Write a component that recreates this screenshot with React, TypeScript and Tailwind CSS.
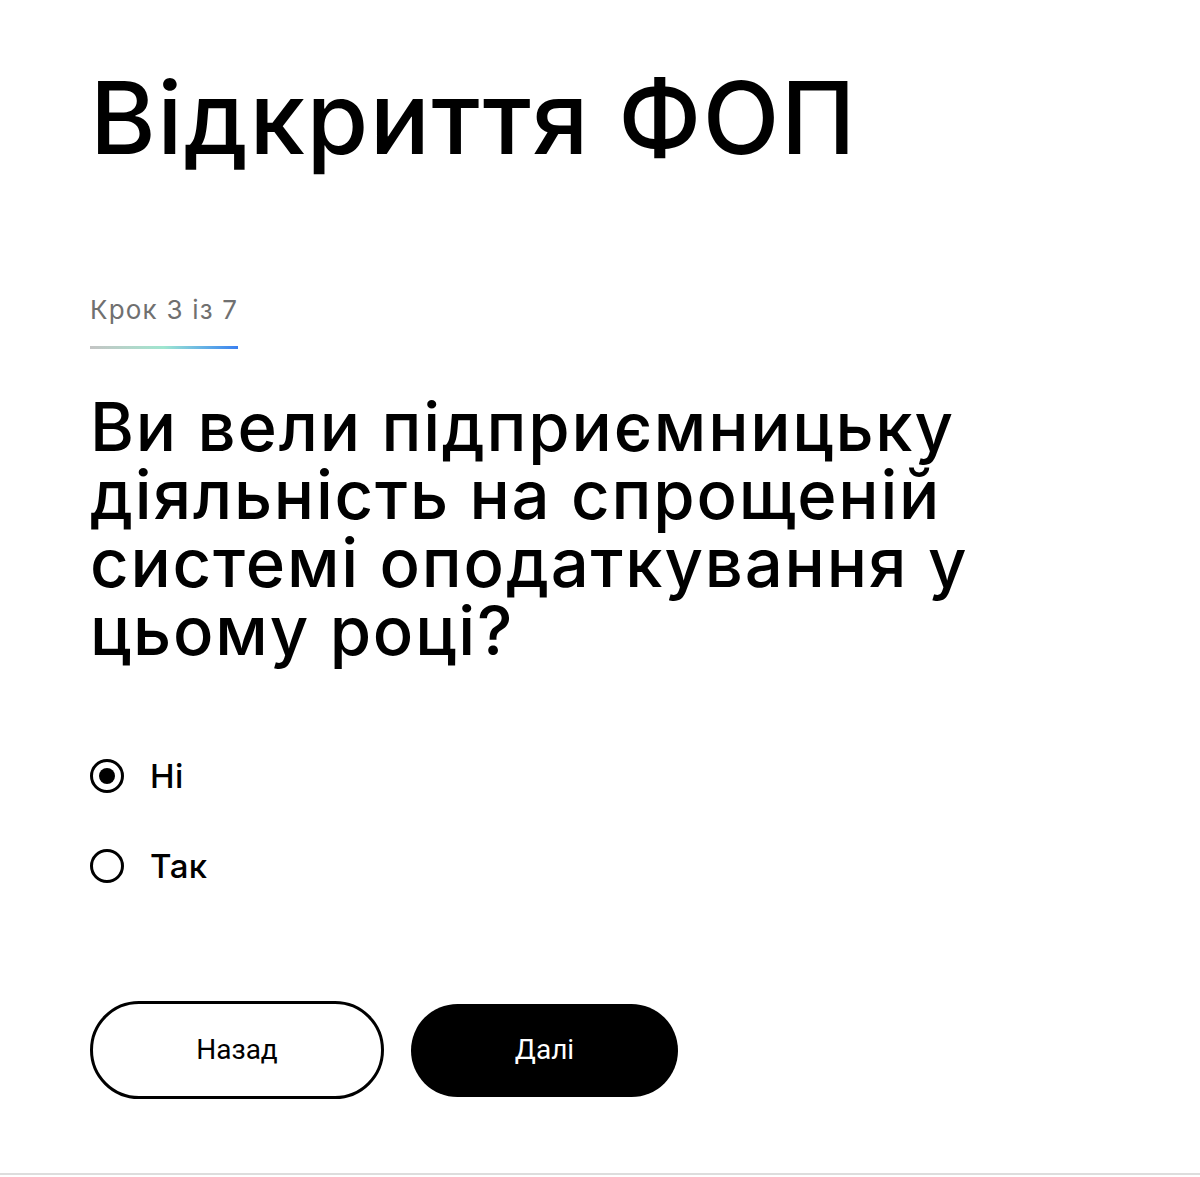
export default function App() {
  return (
    <main
      className="min-h-[1177px] w-full bg-white text-black"
      style={{ fontFamily: 'Inter, "Noto Sans", sans-serif' }}
    >
      <div className="flex min-h-[1175px] flex-col px-[90px] pt-[58px] border-b-2 border-[#dddddd]">
        <h1 className="text-[100px] leading-[120px] font-medium tracking-[1.5px]">Відкриття ФОП</h1>

        <div className="mt-[116px] w-fit">
          <p className="text-[26px] leading-[32px] text-[#707070] tracking-[1.2px]">Крок 3 із 7</p>
          <div className="mt-[20px] h-[3px] w-full bg-gradient-to-r from-[#c4c4c4] via-[#9ee6cf] to-[#3b7ff0]" />
        </div>

        <h2 className="mt-[44px] max-w-[900px] text-[67px] leading-[68px] font-medium tracking-[1.8px]">
          Ви вели підприємницьку діяльність на спрощеній системі оподаткування у цьому році?
        </h2>

        <div className="mt-[94px] flex flex-col gap-[56px]">
          <label className="flex items-center gap-[26px] text-[33px] leading-[34px] font-medium tracking-[0.5px]">
            <span className="flex h-[34px] w-[34px] items-center justify-center rounded-full border-[3.5px] border-black">
              <span className="h-[16px] w-[16px] rounded-full bg-black" />
            </span>
            Ні
          </label>
          <label className="flex items-center gap-[26px] text-[33px] leading-[34px] font-medium tracking-[0.5px]">
            <span className="h-[34px] w-[34px] rounded-full border-[3.5px] border-black" />
            Так
          </label>
        </div>

        <div
          className="mt-[118px] flex items-center gap-[27px]"
          style={{ fontFamily: 'Roboto, "Noto Sans", sans-serif' }}
        >
          <button className="h-[98px] w-[294px] rounded-full border-[3px] border-black bg-white text-[28px] font-normal">
            Назад
          </button>
          <button className="h-[93px] w-[267px] rounded-full bg-black text-[28px] font-normal text-white">
            Далі
          </button>
        </div>
      </div>
    </main>
  );
}
